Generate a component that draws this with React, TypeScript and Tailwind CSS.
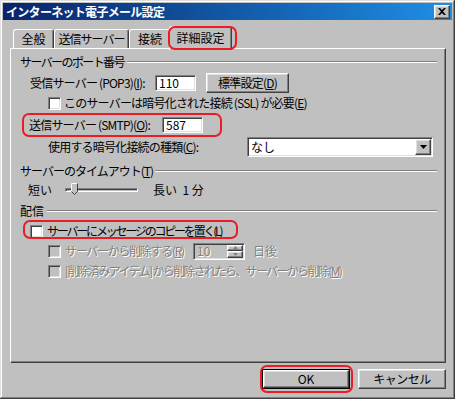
import React from 'react';

const raised =
  'border border-t-white border-l-white border-r-[#404040] border-b-[#404040] shadow-[inset_-1px_-1px_0_#808080,inset_1px_1px_0_#dfdfdf]';
const sunken =
  'border border-t-[#808080] border-l-[#808080] border-r-white border-b-white shadow-[inset_1px_1px_0_#404040,inset_-1px_-1px_0_#dfdfdf]';
const disabledText = 'text-[#808080] [text-shadow:1px_1px_0_#fff]';

function Checkbox({ disabled = false }: { disabled?: boolean }) {
  return (
    <span
      className={`${sunken} block w-[13px] h-[13px] shrink-0 ${disabled ? 'bg-[#c0c0c0]' : 'bg-white'}`}
    />
  );
}

function GroupHeader({
  children,
  gap = 3,
  className = '',
}: {
  children: React.ReactNode;
  gap?: number;
  className?: string;
}) {
  return (
    <div className="flex items-center h-[14px]">
      <span className={`whitespace-nowrap ${className}`}>{children}</span>
      <div
        className={`flex-1 h-[2px] border-t border-t-[#808080] border-b border-b-white ${gap === 3 ? 'ml-[3px]' : 'ml-[2px]'}`}
      />
    </div>
  );
}

function Highlight({ className }: { className: string }) {
  return (
    <div
      className={`absolute z-20 border-2 border-[#ec1c24] rounded-[7px] pointer-events-none ${className}`}
    />
  );
}

export default function App() {
  return (
    <div className="relative w-[455px] h-[399px] bg-[#c0c0c0] p-[3px] pt-[3px] flex flex-col text-[12px] leading-none text-black font-['Noto_Sans_CJK_JP','Noto_Sans',sans-serif] shadow-[inset_-1px_-1px_0_#404040,inset_1px_1px_0_#dfdfdf,inset_-2px_-2px_0_#808080,inset_2px_2px_0_#fff] overflow-hidden">
      {/* title bar */}
      <div className="h-[17px] flex items-center pl-[3px] pr-[2px] bg-gradient-to-r from-[#0a246a] to-[#1f8fe6]">
        <span className="flex-1 text-white font-bold text-[12px] whitespace-nowrap tracking-[-0.7px]">
          インターネット電子メール設定
        </span>
        <button className={`${raised} w-[16px] h-[14px] bg-[#c0c0c0] flex items-center justify-center`}>
          <svg width="8" height="7" viewBox="0 0 8 7">
            <path d="M0 0h2l2 2 2-2h2L5 3.5 8 7H6L4 5 2 7H0l3-3.5z" fill="#000" />
          </svg>
        </button>
      </div>

      {/* tabs */}
      <div className="mt-[6px] ml-[10px] h-[22px] flex items-end">
        <div className="h-[19px] w-[41px] flex items-center justify-center border-t border-l border-t-white border-l-white border-r border-r-[#404040] rounded-t-[3px] shadow-[inset_-1px_0_0_#808080]">
          全般
        </div>
        <div className="h-[19px] w-[75px] flex items-center justify-center border-t border-l border-t-white border-l-white border-r border-r-[#404040] rounded-t-[3px] shadow-[inset_-1px_0_0_#808080] tracking-[-1px]">
          送信サーバー
        </div>
        <div className="h-[19px] w-[42px] flex items-center justify-center border-t border-l border-t-white border-l-white border-r border-r-[#404040] rounded-t-[3px] shadow-[inset_-1px_0_0_#808080]">
          接続
        </div>
        <div className="relative z-10 -ml-[2px] -mb-[2px] h-[24px] w-[63px] pb-[2px] bg-[#c0c0c0] flex items-center justify-center border-t border-l border-t-white border-l-white border-r border-r-[#404040] rounded-t-[3px] shadow-[inset_-1px_0_0_#808080]">
          詳細設定
        </div>
      </div>

      {/* panel */}
      <div className="ml-[7px] w-[436px] h-[315px] border border-t-white border-l-white border-r-[#404040] border-b-[#404040] shadow-[inset_-1px_-1px_0_#808080] pl-[9px] pr-[8px] flex flex-col">
        <div className="mt-[6px]">
          <GroupHeader className="tracking-[-1.6px]">サーバーのポート番号</GroupHeader>
        </div>

        <div className="mt-[4px] h-[20px] flex items-center">
          <span className="ml-[10px] w-[125px] whitespace-nowrap tracking-[-0.8px]">
            受信サーバー (POP3)(<u>I</u>):
          </span>
          <div className={`${sunken} bg-white w-[41px] h-[16px] flex items-center pl-[3px]`}>110</div>
          <button className={`${raised} ml-[10px] w-[83px] h-[20px] bg-[#c0c0c0] flex items-center justify-center tracking-[-0.8px]`}>
            標準設定(<u>D</u>)
          </button>
        </div>

        <div className="mt-[3px] h-[14px] flex items-center">
          <span className="ml-[28px]">
            <Checkbox />
          </span>
          <span className="ml-[3px] whitespace-nowrap tracking-[-0.8px]">
            このサーバーは暗号化された接続 (SSL) が必要(<u>E</u>)
          </span>
        </div>

        <div className="mt-[6px] h-[17px] flex items-center">
          <span className="ml-[9px] w-[133px] whitespace-nowrap tracking-[-0.8px]">
            送信サーバー (SMTP)(<u>O</u>):
          </span>
          <div className={`${sunken} bg-white w-[41px] h-[16px] flex items-center pl-[3px]`}>587</div>
        </div>

        <div className="mt-[4px] h-[20px] flex items-center">
          <span className="ml-[28px] w-[199px] whitespace-nowrap tracking-[-0.8px]">
            使用する暗号化接続の種類(<u>C</u>):
          </span>
          <div className={`${sunken} bg-white w-[186px] h-[20px] flex items-center pl-[3px] pr-[1px]`}>
            <span className="flex-1">なし</span>
            <span className={`${raised} bg-[#c0c0c0] w-[16px] h-[16px] flex items-center justify-center`}>
              <svg width="7" height="4" viewBox="0 0 7 4">
                <path d="M0 0h7L3.5 4z" fill="#000" />
              </svg>
            </span>
          </div>
        </div>

        <div className="mt-[7px]">
          <GroupHeader gap={2} className="tracking-[-1px]">
            サーバーのタイムアウト(<u>T</u>)
          </GroupHeader>
        </div>

        <div className="mt-[4px] h-[16px] flex items-center">
          <span className="ml-[8px] w-[37px]">短い</span>
          <div className="relative w-[73px] h-[16px] flex items-center">
            <div className="w-full h-[4px] border border-t-[#808080] border-l-[#808080] border-r-white border-b-white shadow-[inset_1px_1px_0_#404040]" />
            <svg className="absolute left-[6px] top-[1px]" width="7" height="12" viewBox="0 0 7 12">
              <path d="M0 0h7v8.5L3.5 12 0 8.5z" fill="#c0c0c0" />
              <path d="M0.5 8.5V0.5h6" stroke="#fff" fill="none" />
              <path d="M6.5 0.5v8L3.5 11.5 0.5 8.5" stroke="#404040" fill="none" />
            </svg>
          </div>
          <span className="ml-[15px] whitespace-nowrap">長い&nbsp;&nbsp;1 分</span>
        </div>

        <div className="mt-[6px]">
          <GroupHeader>配信</GroupHeader>
        </div>

        <div className="mt-[6px] h-[14px] flex items-center">
          <span className="ml-[10px]">
            <Checkbox />
          </span>
          <span className="ml-[4px] whitespace-nowrap tracking-[-2.2px]">
            サーバーにメッセージのコピーを置く(<u>L</u>)
          </span>
        </div>

        <div className="mt-[4px] h-[18px] flex items-center">
          <span className="ml-[28px]">
            <Checkbox disabled />
          </span>
          <span className={`ml-[4px] w-[128px] whitespace-nowrap tracking-[-1.3px] ${disabledText}`}>
            サーバーから削除する(<u>R</u>)
          </span>
          <div className={`${sunken} bg-[#c0c0c0] w-[52px] h-[17px] flex items-center pl-[3px] pr-[1px]`}>
            <span className={`flex-1 ${disabledText}`}>10</span>
            <span className="flex flex-col w-[16px] h-[13px]">
              <span className={`${raised} bg-[#c0c0c0] flex-1 flex items-center justify-center`}>
                <svg width="5" height="3" viewBox="0 0 5 3">
                  <path d="M2.5 0L5 3H0z" fill="#808080" />
                </svg>
              </span>
              <span className={`${raised} bg-[#c0c0c0] flex-1 flex items-center justify-center`}>
                <svg width="5" height="3" viewBox="0 0 5 3">
                  <path d="M0 0h5L2.5 3z" fill="#808080" />
                </svg>
              </span>
            </span>
          </div>
          <span className={`ml-[8px] ${disabledText}`}>日後</span>
        </div>

        <div className="mt-[4px] h-[14px] flex items-center">
          <span className="ml-[28px]">
            <Checkbox disabled />
          </span>
          <span className={`ml-[4px] whitespace-nowrap tracking-[-1.65px] ${disabledText}`}>
            [削除済みアイテム] から削除されたら、サーバーから削除(<u>M</u>)
          </span>
        </div>
      </div>

      {/* buttons */}
      <div className="mt-[6px] flex justify-end gap-[8px] pr-[6px]">
        <div className="border border-black">
          <button className={`${raised} w-[86px] h-[18px] bg-[#c0c0c0] flex items-center justify-center`}>
            OK
          </button>
        </div>
        <button className={`${raised} w-[88px] h-[20px] bg-[#c0c0c0] flex items-center justify-center tracking-[-0.5px]`}>
          キャンセル
        </button>
      </div>

      {/* red annotations */}
      <Highlight className="left-[168px] top-[26px] w-[69px] h-[24px]" />
      <Highlight className="left-[22px] top-[113px] w-[200px] h-[24px]" />
      <Highlight className="left-[23px] top-[220px] w-[215px] h-[19px]" />
      <Highlight className="left-[260px] top-[365px] w-[93px] h-[28px]" />
    </div>
  );
}
